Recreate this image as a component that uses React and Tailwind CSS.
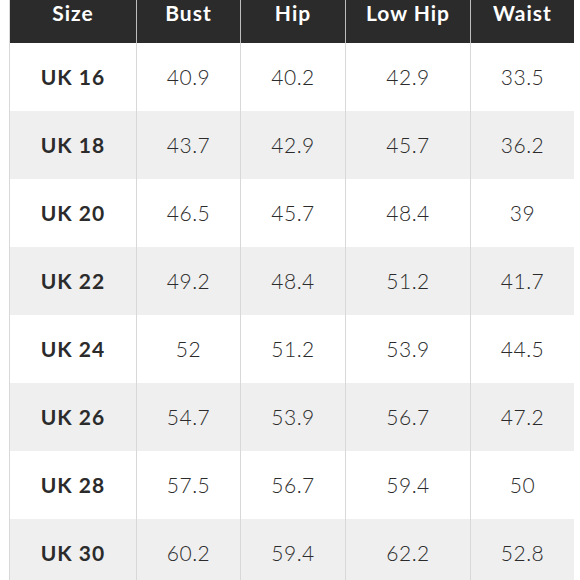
const headers = ['Size', 'Bust', 'Hip', 'Low Hip', 'Waist']

const rows = [
  ['UK 16', '40.9', '40.2', '42.9', '33.5'],
  ['UK 18', '43.7', '42.9', '45.7', '36.2'],
  ['UK 20', '46.5', '45.7', '48.4', '39'],
  ['UK 22', '49.2', '48.4', '51.2', '41.7'],
  ['UK 24', '52', '51.2', '53.9', '44.5'],
  ['UK 26', '54.7', '53.9', '56.7', '47.2'],
  ['UK 28', '57.5', '56.7', '59.4', '50'],
  ['UK 30', '60.2', '59.4', '62.2', '52.8'],
]

export default function App() {
  return (
    <div className="w-[580px] h-[580px] overflow-hidden bg-white pl-[9px] font-['Lato','Liberation_Sans',sans-serif]">
      <div className="w-[565px] grid grid-cols-[127px_104px_105px_125px_104px] border-r border-[#d8d8d8]">
        {/* header */}
        {headers.map((h, i) => (
          <div
            key={h}
            className={`h-[43px] bg-[#2b2b2b] text-white font-bold text-[21px] tracking-[1px] leading-[26px] text-center ${i === 0 ? 'border-l border-[#d8d8d8]' : 'border-l border-[#bdbdbd]'}`}
          >
            {h}
          </div>
        ))}

        {/* rows */}
        {rows.map((r, ri) =>
          r.map((v, ci) => (
            <div
              key={ri + '-' + ci}
              className={`h-[68px] flex items-center justify-center border-l border-[#d8d8d8] text-[#2b2b2b] text-[21px] ${ri % 2 === 1 ? 'bg-[#efefef]' : 'bg-white'} ${ci === 0 ? 'font-bold tracking-[1px]' : 'font-light tracking-[0.5px]'}`}
            >
              {v}
            </div>
          ))
        )}
      </div>
    </div>
  )
}
